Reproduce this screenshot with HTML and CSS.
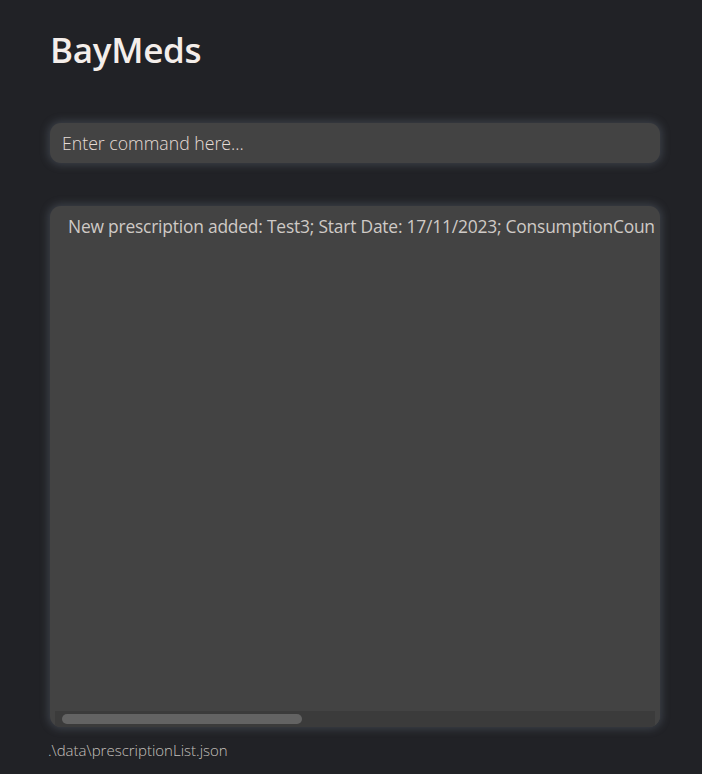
FILE: index.html
```html
<!DOCTYPE html>
<html>
<head>
<meta charset="utf-8">
<link rel="stylesheet" href="styles.css">
</head>
<body>
<div class="app">
  <h1 class="title">BayMeds</h1>
  <div class="command">
    <span class="placeholder">Enter command here...</span>
  </div>
  <div class="result">
    <div class="result-text">New prescription added: Test3; Start Date: 17/11/2023; ConsumptionCount: 0; Stock: 20; End Date: 30/11/2023</div>
    <div class="hscroll">
      <div class="track"><div class="thumb"></div></div>
      <div class="corner"></div>
    </div>
  </div>
  <div class="status">.\data\prescriptionList.json</div>
</div>
</body>
</html>
```
FILE: styles.css
```css
html, body {
  margin: 0;
  padding: 0;
  background: #212226;
  height: 100%;
}
.app {
  display: flex;
  flex-direction: column;
  padding: 28px 42px 0 50px;
  font-family: "Open Sans", "Noto Sans", sans-serif;
}
.title {
  margin: 0;
  font-size: 35px;
  font-weight: 600;
  color: #f4eeea;
  line-height: 44px;
  letter-spacing: -0.3px;
}
.command {
  margin-top: 51px;
  height: 40px;
  background: #434343;
  border-radius: 11px;
  box-shadow: 0 0 9px 2px rgba(125, 140, 155, 0.3);
  display: flex;
  align-items: center;
  padding-left: 12px;
}
.placeholder {
  font-size: 17.7px;
  font-weight: 300;
  color: #e6dcd6;
  letter-spacing: 0;
  margin-top: -1px;
}
.result {
  margin-top: 43px;
  height: 521px;
  background: #434343;
  border-radius: 11px;
  box-shadow: 0 0 9px 2px rgba(125, 140, 155, 0.3);
  display: flex;
  flex-direction: column;
  overflow: hidden;
}
.result-text {
  flex: 1;
  padding: 8px 0 0 18px;
  font-size: 17.4px;
  font-weight: 400;
  color: #cfcac6;
  white-space: nowrap;
  overflow: hidden;
  letter-spacing: -0.2px;
  margin-right: 5px;
}
.hscroll {
  display: flex;
  height: 16px;
  padding-left: 5px;
}
.track {
  flex: 1;
  background: #3b3b3b;
  display: flex;
  align-items: center;
  padding-left: 7px;
}
.thumb {
  width: 240px;
  height: 10px;
  background: #636363;
  border-radius: 5px;
}
.corner {
  width: 5px;
  background: #434343;
}
.status {
  margin-top: 13px;
  margin-left: -2px;
  font-size: 15px;
  font-weight: 300;
  color: #c4c0bd;
  letter-spacing: 0;
}
```
